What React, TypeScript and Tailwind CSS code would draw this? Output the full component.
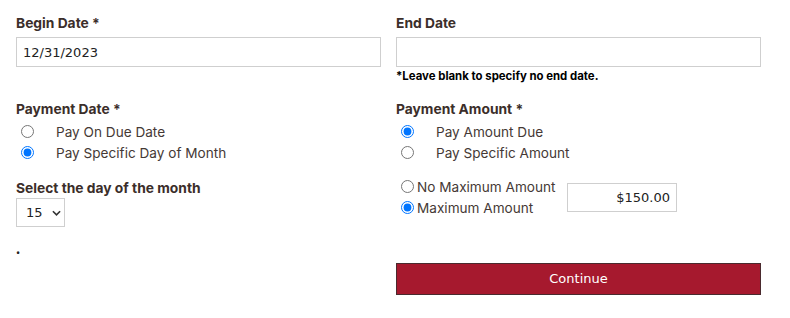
import React from 'react';

const LABEL = 'block h-[18px] text-[13.8px] leading-[20px] font-bold text-[#3b2e2a] font-["Inter","Liberation_Sans",sans-serif]';
const OPTION = 'pt-[2px] text-[13.6px] leading-[18px] text-[#453935] font-["Inter","Liberation_Sans",sans-serif]';
const FIELD = 'border border-[#cfcfcf] bg-white text-[13px] text-[#222] font-["DejaVu_Sans",sans-serif] outline-none';

interface RadioRowProps {
  name: string;
  label: string;
  checked?: boolean;
  textGap: string;
}

const RadioRow = ({ name, label, checked, textGap }: RadioRowProps) => (
  <label className="flex h-[21px] items-center">
    <input
      type="radio"
      name={name}
      defaultChecked={checked}
      className="ml-[5px] mt-[1px] h-[13px] w-[13px] shrink-0 accent-[#0075ff]"
    />
    <span className={`${OPTION} ${textGap}`}>{label}</span>
  </label>
);

export default function App() {
  return (
    <div className="min-h-[318px] w-[790px] bg-white">
      <div className="flex gap-[15px] pl-4 pt-[13px]">
        {/* Left column */}
        <div className="flex w-[365px] flex-col">
          <span className={LABEL}>Begin Date *</span>
          <input
            type="text"
            defaultValue="12/31/2023"
            className={`${FIELD} mt-[6px] h-[30px] w-full px-[6px] pt-[1px]`}
          />

          <span className={`${LABEL} mt-[32px]`}>Payment Date *</span>
          <div className="mt-[3px] flex flex-col">
            <RadioRow name="paydate" label="Pay On Due Date" textGap="ml-[22px]" />
            <RadioRow name="paydate" label="Pay Specific Day of Month" textGap="ml-[22px]" checked />
          </div>

          <span className={`${LABEL} mt-[16px]`}>Select the day of the month</span>
          <div className="relative mt-[2px] h-[29px] w-[49px]">
            <select
              defaultValue="15"
              className={`${FIELD} h-full w-full appearance-none pl-[9px]`}
            >
              {Array.from({ length: 28 }, (_, i) => (
                <option key={i + 1} value={String(i + 1)}>
                  {i + 1}
                </option>
              ))}
            </select>
            <svg
              viewBox="0 0 10 6"
              className="pointer-events-none absolute left-[36px] top-[12px] h-[6px] w-[9px]"
            >
              <path d="M1 1l4 4 4-4" fill="none" stroke="#333" strokeWidth="1.8" />
            </svg>
          </div>

          <span className="mt-[21px] block h-[10px] text-[11px] leading-[10px] text-[#222]">•</span>
        </div>

        {/* Right column */}
        <div className="flex w-[365px] flex-col">
          <span className={LABEL}>End Date</span>
          <input type="text" className={`${FIELD} mt-[6px] h-[30px] w-full px-[6px]`} />
          <span className='mt-[2px] block h-[14px] text-[11.4px] leading-[15px] font-bold text-black font-["Inter","Liberation_Sans",sans-serif]'>
            *Leave blank to specify no end date.
          </span>

          <span className={`${LABEL} mt-[16px]`}>Payment Amount *</span>
          <div className="mt-[3px] flex flex-col">
            <RadioRow name="payamount" label="Pay Amount Due" textGap="ml-[22px]" checked />
            <RadioRow name="payamount" label="Pay Specific Amount" textGap="ml-[22px]" />
          </div>

          <div className="mt-[13px] flex items-center gap-[10px]">
            <div className="flex w-[161px] flex-col">
              <RadioRow name="maxamount" label="No Maximum Amount" textGap="ml-[3px]" />
              <RadioRow name="maxamount" label="Maximum Amount" textGap="ml-[3px]" checked />
            </div>
            <input
              type="text"
              defaultValue="$150.00"
              className={`${FIELD} mt-[2px] h-[29px] w-[110px] px-[6px] text-right`}
            />
          </div>

          <button
            type="button"
            className='mt-[46px] h-[32px] w-full border border-[#4a2a2e] bg-[#a6192e] text-[13px] text-white font-["DejaVu_Sans",sans-serif]'
          >
            Continue
          </button>
        </div>
      </div>
    </div>
  );
}
